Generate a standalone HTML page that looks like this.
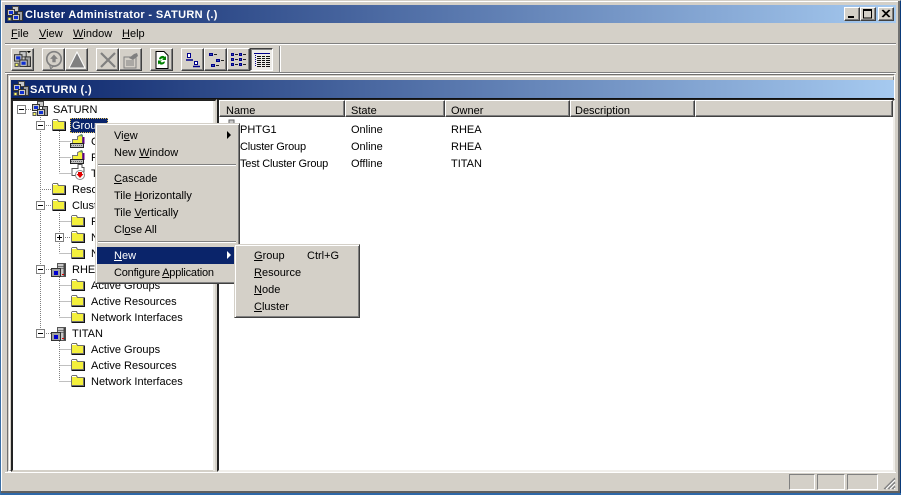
<!DOCTYPE html>
<html><head><meta charset="utf-8"><style>
html,body{margin:0;padding:0;width:901px;height:495px;overflow:hidden;background:#d4d0c8}
div{position:absolute;box-sizing:border-box}
.t{font:11px/13px "Liberation Sans",sans-serif;color:#000;white-space:nowrap;letter-spacing:0;margin-top:1px}
.n{letter-spacing:-.2px}
.b{font-weight:bold;color:#fff;letter-spacing:.35px}
svg{position:absolute;overflow:visible}
.btn{width:23px;height:23px;top:48px;background:#d4d0c8;border:1px solid;border-color:#fff #404040 #404040 #fff;box-shadow:inset -1px -1px 0 #808080}
.h{top:100px;height:17px;background:#d4d0c8;border:1px solid;border-color:#fff #404040 #404040 #fff;box-shadow:inset -1px -1px 0 #808080}
.m{position:absolute;background:#d4d0c8;border:1px solid;border-color:#d4d0c8 #404040 #404040 #d4d0c8;box-shadow:inset 1px 1px 0 #fff,inset -1px -1px 0 #808080}
.sep{height:2px;background:#808080;border-bottom:1px solid #fff}
.wb{width:16px;height:14px;top:7px;background:#d4d0c8;border:1px solid;border-color:#fff #404040 #404040 #fff;box-shadow:inset -1px -1px 0 #808080}
</style></head><body>
<!-- outer window frame -->
<div style="left:0;top:0;width:901px;height:495px;background:#d4d0c8;border:1px solid;border-color:#d4d0c8 #0a3a7a #2a5a9a #3a6ea5"></div>
<div style="left:1px;top:1px;width:899px;height:1px;background:#fff"></div>
<div style="left:1px;top:1px;width:1px;height:492px;background:#fff"></div>
<div style="left:898px;top:1px;width:2px;height:492px;background:#707070"></div>
<div style="left:1px;top:491px;width:899px;height:2px;background:#606060"></div>
<div style="left:0;top:493px;width:901px;height:2px;background:#2e68a8"></div>
<div style="left:0;top:0;width:1px;height:495px;background:#3a6ea5"></div>
<!-- title bar -->
<div style="left:5px;top:5px;width:891px;height:18px;background:linear-gradient(90deg,#0a246a,#a6caf0)"></div>
<svg style="left:7px;top:6px" width="16" height="16" viewBox="0 0 16 16"><use href="#clu"/></svg>
<div class="t b" style="left:25px;top:8px;font-size:11px">Cluster Administrator - SATURN (.)</div>
<div class="wb" style="left:844px"><svg style="left:3px;top:8px" width="7" height="2"><rect width="6" height="2" fill="#000"/></svg></div>
<div class="wb" style="left:860px"><svg style="left:2px;top:1px" width="10" height="10"><rect x=".5" y="1" width="8" height="8" fill="none" stroke="#000"/><rect x="0" y="0" width="9" height="2" fill="#000"/></svg></div>
<div class="wb" style="left:878px"><svg style="left:3px;top:2px" width="9" height="8"><path d="M0 0L7 7M1 0L8 7M7 0L0 7M8 0L1 7" stroke="#000" stroke-width="1"/></svg></div>
<!-- menu -->
<div class="t" style="left:11px;top:27px"><u>F</u>ile</div>
<div class="t" style="left:39px;top:27px"><u>V</u>iew</div>
<div class="t" style="left:73px;top:27px"><u>W</u>indow</div>
<div class="t" style="left:122px;top:27px"><u>H</u>elp</div>
<div style="left:5px;top:43px;width:891px;height:1px;background:#808080"></div>
<div style="left:5px;top:44px;width:891px;height:1px;background:#fff"></div>
<!-- toolbar -->
<div class="btn" style="left:11px"><svg style="left:2px;top:2px" width="17" height="17" viewBox="0 0 16 16"><use href="#clu"/><path d="M12 0h4l-2 2z" fill="#000"/></svg></div>
<div class="btn" style="left:42px"><svg style="left:1px;top:1px" width="20" height="20" viewBox="0 0 18 18"><circle cx="9" cy="8" r="6.500" fill="none" stroke="#808080" stroke-width="1.500"/><path d="M5 13l1 4 3-3" fill="none" stroke="#808080"/><path d="M9 4l3.500 4H10.500v3h-3V8H5.500z" fill="#808080"/></svg></div>
<div class="btn" style="left:65px"><svg style="left:2px;top:2px" width="18" height="18" viewBox="0 0 18 18"><path d="M9 1L17 17H1z" fill="#808080" stroke="#fff" stroke-width="1"/></svg></div>
<div class="btn" style="left:96px"><svg style="left:3px;top:3px" width="16" height="16" viewBox="0 0 16 16"><path d="M1 1L15 15M15 1L1 15" stroke="#808080" stroke-width="2.200"/></svg></div>
<div class="btn" style="left:119px"><svg style="left:2px;top:2px" width="18" height="18" viewBox="0 0 18 18"><path d="M2 6h12v11H2z" fill="#d4d0c8" stroke="#808080"/><path d="M4 10h8M4 12h8M4 14h8" stroke="#808080"/><path d="M7 7l5-4 3-1 1 3-5 4z" fill="#808080"/></svg></div>
<div class="btn" style="left:150px"><svg style="left:3px;top:2px" width="16" height="18" viewBox="0 0 16 18"><path d="M2 .5h8l4 4v13H2z" fill="#fff" stroke="#000"/><path d="M5 8a3.500 3.500 0 0 1 6-2l1-1v4H8l1.500-1.200A2 2 0 0 0 6.500 8.500zM11 10.500a3.500 3.500 0 0 1-6 2l-1 1v-4h4l-1.500 1.200a2 2 0 0 0 3 .0z" fill="#008000"/></svg></div>
<div class="btn" style="left:181px"><svg style="left:3px;top:3px" width="16" height="16" viewBox="0 0 16 16"><path d="M2.500 1.500h3v4h-3zM9.500 9.500h3v3h-3z" fill="#fff" stroke="#00008b"/><path d="M1 8h7M8 14.500h7" stroke="#00008b" stroke-width="1.500"/></svg></div>
<div class="btn" style="left:204px"><svg style="left:3px;top:3px" width="16" height="16" viewBox="0 0 16 16"><path d="M1.500 1.500h3v2h-3zM8.500 7.500h3v2h-3zM3.500 12.500h3v2h-3z" fill="#3050b0" stroke="#00008b"/><path d="M6 2.500h3M13 8.500h3M8 13.500h3" stroke="#222"/></svg></div>
<div class="btn" style="left:227px"><svg style="left:3px;top:3px" width="16" height="16" viewBox="0 0 16 16"><path d="M.5 1.500h2v2h-2zM8.500 1.500h2v2h-2zM.5 6.500h2v2h-2zM8.500 6.500h2v2h-2zM.5 11.500h2v2h-2zM8.500 11.500h2v2h-2z" fill="#3050b0" stroke="#00008b"/><path d="M4 2.500h3M12 2.500h3M4 7.500h3M12 7.500h3M4 12.500h3M12 12.500h3" stroke="#222"/></svg></div>
<div class="btn" style="left:250px;border-color:#404040 #fff #fff #404040;box-shadow:inset 1px 1px 0 #808080;background:#eeece8"><svg style="left:3px;top:3px" width="16" height="16" viewBox="0 0 16 16"><path d="M0 1.500h16" stroke="#00008b"/><path d="M1.500 3v12" stroke="#00008b" stroke-width="1" stroke-dasharray="1 1"/><path d="M3 4.500h13M3 6.500h13M3 8.500h13M3 10.500h13M3 12.500h13M3 14.500h13" stroke="#111"/><path d="M7.500 3v12M11.500 3v12" stroke="#eeece8"/></svg></div>
<div style="left:279px;top:46px;width:1px;height:27px;background:#808080"></div>
<div style="left:280px;top:46px;width:1px;height:27px;background:#fff"></div>
<div style="left:5px;top:72px;width:891px;height:1px;background:#808080"></div>
<div style="left:5px;top:73px;width:891px;height:1px;background:#fff"></div>
<!-- MDI child frame -->
<div style="left:7px;top:74px;width:888px;height:398px;background:#d4d0c8;border:1px solid;border-color:#707070 #fff #fff #707070"></div>
<div style="left:9px;top:76px;width:885px;height:395px;border:1px solid;border-color:#fff #808080 #808080 #fff"></div>
<div style="left:11px;top:80px;width:883px;height:18px;background:linear-gradient(90deg,#0a246a,#a6caf0)"></div>
<div style="left:11px;top:98px;width:883px;height:1px;background:#111"></div>
<svg style="left:13px;top:81px" width="16" height="16" viewBox="0 0 16 16"><use href="#clu"/></svg>
<div class="t b" style="left:30px;top:83px">SATURN (.)</div>
<!-- tree pane -->
<div style="left:11px;top:99px;width:206px;height:373px;background:#fff;border:2px solid;border-color:#222 #d4d0c8 #d4d0c8 #222"></div>
<div style="left:213px;top:101px;width:2px;height:370px;background:#e8e6e0"></div>
<!-- list pane -->
<div style="left:217px;top:99px;width:678px;height:373px;background:#fff;border:2px solid;border-color:#222 #f0eeea #f0eeea #222"></div>
<div class="h" style="left:219px;width:126px"></div>
<div class="h" style="left:345px;width:100px"></div>
<div class="h" style="left:445px;width:125px"></div>
<div class="h" style="left:570px;width:125px"></div>
<div class="h" style="left:695px;width:198px"></div>
<div class="t" style="left:226px;top:104px">Name</div>
<div class="t" style="left:351px;top:104px">State</div>
<div class="t" style="left:451px;top:104px">Owner</div>
<div class="t" style="left:575px;top:104px">Description</div>
<svg style="left:228px;top:119px" width="9" height="6"><path d="M1 1h5v5H1z" fill="#c8c8c8" stroke="#666"/></svg>
<div class="t" style="left:240px;top:123px">PHTG1</div><div class="t" style="left:351px;top:123px">Online</div><div class="t" style="left:451px;top:123px">RHEA</div>
<div class="t n" style="left:240px;top:140px">Cluster Group</div><div class="t" style="left:351px;top:140px">Online</div><div class="t" style="left:451px;top:140px">RHEA</div>
<div class="t n" style="left:240px;top:157px">Test Cluster Group</div><div class="t" style="left:351px;top:157px">Offline</div><div class="t" style="left:451px;top:157px">TITAN</div>

<!-- tree graphics -->
<svg style="left:0;top:0" width="240" height="400">
<defs>
<symbol id="fo" viewBox="0 0 15 14" width="15" height="14" overflow="visible">
<path d="M1.500 3.500V2.500l1-1h4l1 2h6v8h-12z" fill="#f4f03c" stroke="#707070"/>
<path d="M2 2.500h4" stroke="#fff"/>
<path d="M14.500 3.500v9h-13" fill="none" stroke="#111"/>
</symbol>
<symbol id="srv" viewBox="0 0 16 16" width="16" height="16" overflow="visible">
<path d="M6.500 1.500h8v13h-8z" fill="#c8c8c8" stroke="#555"/>
<path d="M7 4.500h7M7 6.500h7" stroke="#777"/>
<path d="M12.500 2v12h2V2z" fill="#444"/>
<rect x=".5" y="6.500" width="9" height="8" fill="#a0a0a0" stroke="#333"/>
<rect x="3" y="9" width="4" height="4" fill="#0000d0"/>
<rect x="11" y="12" width="2" height="1" fill="#e00000"/>
</symbol>
<symbol id="clu" viewBox="0 0 16 16" width="16" height="16" overflow="visible">
<path d="M5.500 .5h6v5h-6z" fill="#c8c8c8" stroke="#444"/>
<path d="M10.500 5.500h5v9h-5z" fill="#a0a0a0" stroke="#333"/>
<rect x=".5" y="3.500" width="7" height="6" fill="#c8c8c8" stroke="#333"/><rect x="2" y="5" width="4" height="3" fill="#1030d0"/>
<rect x="5.500" y="8.500" width="7" height="6" fill="#c8c8c8" stroke="#333"/><rect x="7" y="10" width="4" height="3" fill="#1030d0"/>
<path d="M1 11.500h3v3H1z" fill="#ffff60" stroke="#555"/>
</symbol>
<symbol id="grp" viewBox="0 0 16 15" width="16" height="15" overflow="visible">
<path d="M2.500 6.500h5v-3l4-2 1 1v8h-10z" fill="#f4f03c" stroke="#777"/>
<path d="M10.500 1.500h2v2h-2z" fill="#60a060"/>
<path d="M12.500 4v7h2V4z" fill="#600080"/>
<path d="M.5 10.500h13v4H.5z" fill="#c0c0c0" stroke="#222"/>
<path d="M1 12.500h12" stroke="#666" stroke-dasharray="1 1"/>
</symbol>
</defs>
<g stroke="#808080" stroke-dasharray="1 1" fill="none">
<path d="M26 109.500h6"/>
<path d="M40.500 117V333M44 125.500h8M40 189.500h12M44 205.500h8M44 269.500h8M44 333.500h8"/>
<path d="M59.500 129V173M59.500 141.500h11M59.500 157.500h11M59.500 173.500h11"/>
<path d="M59.500 213V253M59.500 221.500h11M63 237.500h8M59.500 253.500h11"/>
<path d="M59.500 277V317M59.500 285.500h11M59.500 301.500h11M59.500 317.500h11"/>
<path d="M59.500 341V381M59.500 349.500h11M59.500 365.500h11M59.500 381.500h11"/>
</g>
<g fill="#fff" stroke="#808080">
<rect x="17.500" y="105.500" width="8" height="8"/><rect x="36.500" y="121.500" width="8" height="8"/><rect x="36.500" y="201.500" width="8" height="8"/><rect x="55.500" y="233.500" width="8" height="8"/><rect x="36.500" y="265.500" width="8" height="8"/><rect x="36.500" y="329.500" width="8" height="8"/>
</g>
<path d="M19 109.500h5M38 125.500h5M38 205.500h5M57 237.500h5M59.500 235v5M38 269.500h5M38 333.500h5" stroke="#000"/>
<use href="#clu" x="32" y="101"/>
<use href="#fo" x="51" y="118"/>
<use href="#grp" x="70" y="133"/>
<use href="#grp" x="70" y="149"/>
<path d="M72 168.500h6v-4h4v3h2v4a4.500 4.500 0 0 1-4 4h-8v-5z" fill="#fff" stroke="#555"/><circle cx="80" cy="175" r="4.500" fill="#fff" stroke="#888"/><path d="M78 172h4v2h1.500L80 178l-3.500-4H78z" fill="#e00000"/>
<use href="#fo" x="51" y="182"/>
<use href="#fo" x="51" y="198"/>
<use href="#fo" x="70" y="214"/>
<use href="#fo" x="70" y="230"/>
<use href="#fo" x="70" y="246"/>
<use href="#srv" x="51" y="262"/>
<use href="#fo" x="70" y="278"/>
<use href="#fo" x="70" y="294"/>
<use href="#fo" x="70" y="310"/>
<use href="#srv" x="51" y="326"/>
<use href="#fo" x="70" y="342"/>
<use href="#fo" x="70" y="358"/>
<use href="#fo" x="70" y="374"/>
</svg>
<div class="t" style="left:53px;top:103px">SATURN</div>
<div style="left:70px;top:118px;width:38px;height:15px;background:#0a246a;outline:1px dotted #e0c060;outline-offset:-1px"></div>
<div class="t" style="left:72px;top:119px;color:#fff">Groups</div>
<div class="t" style="left:91px;top:135px">Cluster Group</div>
<div class="t" style="left:91px;top:151px">PHTG1</div>
<div class="t" style="left:91px;top:167px">Test Cluster Group</div>
<div class="t" style="left:72px;top:183px">Resources</div>
<div class="t" style="left:72px;top:199px">Cluster Configuration</div>
<div class="t" style="left:91px;top:215px">Resource Types</div>
<div class="t" style="left:91px;top:231px">Networks</div>
<div class="t" style="left:91px;top:247px">Network Interfaces</div>
<div class="t" style="left:72px;top:263px">RHEA</div>
<div class="t" style="left:91px;top:279px">Active Groups</div>
<div class="t" style="left:91px;top:295px">Active Resources</div>
<div class="t" style="left:91px;top:311px">Network Interfaces</div>
<div class="t" style="left:72px;top:327px">TITAN</div>
<div class="t" style="left:91px;top:343px">Active Groups</div>
<div class="t" style="left:91px;top:359px">Active Resources</div>
<div class="t" style="left:91px;top:375px">Network Interfaces</div>

<!-- status bar -->
<div style="left:5px;top:472px;width:891px;height:1px;background:#fff"></div>
<div style="left:789px;top:474px;width:26px;height:16px;border:1px solid;border-color:#808080 #fff #fff #808080"></div>
<div style="left:817px;top:474px;width:28px;height:16px;border:1px solid;border-color:#808080 #fff #fff #808080"></div>
<div style="left:847px;top:474px;width:31px;height:16px;border:1px solid;border-color:#808080 #fff #fff #808080"></div>
<svg style="left:883px;top:477px" width="13" height="13"><path d="M12 1L1 12M12 2L2 12M12 5L5 12M12 6L6 12M12 9L9 12M12 10L10 12" stroke="#808080"/><path d="M12 3L3 12M12 7L7 12M12 11L11 12" stroke="#fff"/></svg>

<!-- context menu -->
<div class="m" style="left:95px;top:123px;width:145px;height:161px"></div>
<div class="sep" style="left:98px;top:164px;width:138px"></div>
<div class="sep" style="left:98px;top:241px;width:138px"></div>
<div style="left:97px;top:247px;width:137px;height:17px;background:#0a246a"></div>
<div class="t" style="left:114px;top:129px">Vi<u>e</u>w</div>
<svg style="left:227px;top:131px" width="5" height="9"><path d="M0 0l4 4-4 4z" fill="#000"/></svg>
<div class="t" style="left:114px;top:146px">New <u>W</u>indow</div>
<div class="t" style="left:114px;top:172px"><u>C</u>ascade</div>
<div class="t" style="left:114px;top:189px">Tile <u>H</u>orizontally</div>
<div class="t" style="left:114px;top:206px">Tile <u>V</u>ertically</div>
<div class="t" style="left:114px;top:223px">Cl<u>o</u>se All</div>
<div class="t" style="left:114px;top:249px;color:#fff"><u>N</u>ew</div>
<svg style="left:227px;top:251px" width="5" height="9"><path d="M0 0l4 4-4 4z" fill="#fff"/></svg>
<div class="t n" style="left:114px;top:266px">Configure <u>A</u>pplication</div>
<!-- submenu -->
<div class="m" style="left:234px;top:244px;width:126px;height:74px"></div>
<div class="t" style="left:254px;top:249px"><u>G</u>roup</div>
<div class="t" style="left:307px;top:249px">Ctrl+G</div>
<div class="t" style="left:254px;top:266px"><u>R</u>esource</div>
<div class="t" style="left:254px;top:283px"><u>N</u>ode</div>
<div class="t" style="left:254px;top:300px"><u>C</u>luster</div>
</body></html>
